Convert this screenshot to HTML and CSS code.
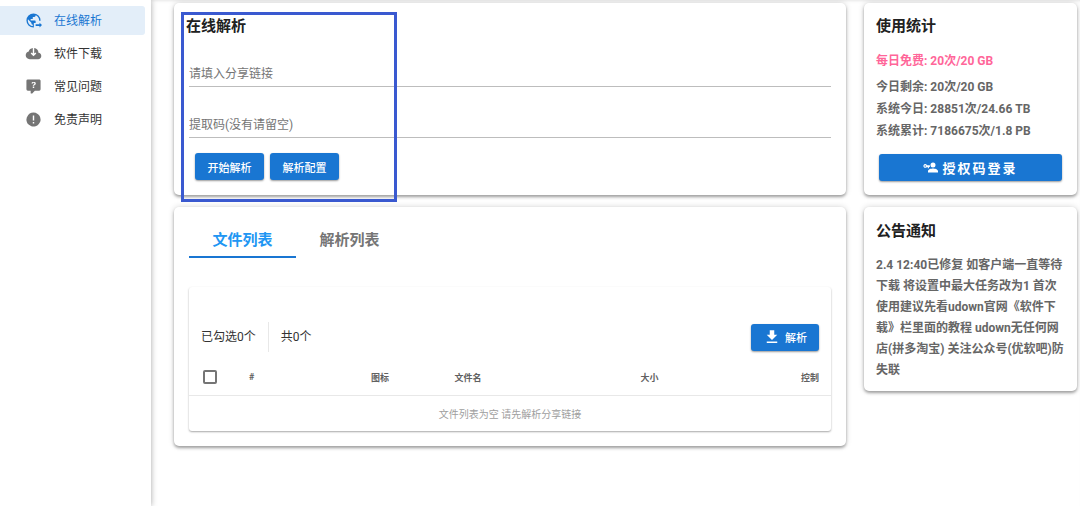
FILE: index.html
```html
<!DOCTYPE html>
<html lang="zh-CN">
<head>
<meta charset="utf-8">
<meta name="viewport" content="width=device-width, initial-scale=1">
<title>在线解析</title>
<link rel="stylesheet" href="styles.css">
</head>
<body>
<nav class="sidebar">
  <a class="nav-item active" href="#parse">
    <svg class="icon" viewBox="0 0 24 24"><mask id="globe-cut"><rect width="24" height="24" fill="#fff"/><path d="M12.500 15.500H18V12.500H24V24H12.500Z" fill="#000"/></mask><path mask="url(#globe-cut)" d="M17.900 17.390C17.640 16.590 16.890 16 16 16H15V13A1 1 0 0 0 14 12H8V10H10A1 1 0 0 0 11 9V7H13A2 2 0 0 0 15 5V4.590C17.930 5.770 20 8.640 20 12C20 14.080 19.200 15.970 17.900 17.390M11 19.930C7.050 19.440 4 16.080 4 12C4 11.380 4.080 10.780 4.210 10.210L9 15V16A2 2 0 0 0 11 18M12 2A10 10 0 0 0 2 12A10 10 0 0 0 12 22A10 10 0 0 0 22 12A10 10 0 0 0 12 2Z"/><path d="M24 18.500L20.500 15V17.300H15V19.700H20.500V22Z"/></svg>
    <span>在线解析</span>
  </a>
  <a class="nav-item" href="#download">
    <svg class="icon" viewBox="0 0 24 24"><path d="M6.500 20Q4.220 20 2.610 18.430 1 16.850 1 14.580 1 12.630 2.170 11.100 3.350 9.570 5.250 9.150 5.830 7.130 7.390 5.750 8.950 4.380 11 4.080V12.150L9.400 10.600L8 12L12 16L16 12L14.600 10.600L13 12.150V4.080Q15.580 4.430 17.290 6.390 19 8.350 19 11 20.730 11.200 21.860 12.500 23 13.780 23 15.500 23 17.380 21.690 18.690 20.380 20 18.500 20Z"/></svg>
    <span>软件下载</span>
  </a>
  <a class="nav-item" href="#faq">
    <svg class="icon" viewBox="0 0 24 24"><path fill-rule="evenodd" d="M4 2A2 2 0 0 0 2 4V16A2 2 0 0 0 4 18H8V21A1 1 0 0 0 9 22H9.500C9.750 22 10 21.900 10.200 21.710L13.900 18H20A2 2 0 0 0 22 16V4C22 2.890 21.100 2 20 2ZM12.190 5.500C11.300 5.500 10.590 5.680 10.050 6.040C9.500 6.400 9.220 7 9.270 7.690H11.240C11.240 7.410 11.340 7.200 11.500 7.060C11.700 6.920 11.920 6.850 12.190 6.850C12.500 6.850 12.770 6.930 12.950 7.110C13.130 7.280 13.220 7.500 13.220 7.800C13.220 8.080 13.140 8.330 13 8.540C12.830 8.760 12.620 8.940 12.360 9.080C11.840 9.400 11.500 9.680 11.290 9.920C11.100 10.160 11 10.500 11 11H13C13 10.720 13.050 10.500 13.140 10.320C13.230 10.150 13.400 10 13.660 9.850C14.120 9.640 14.500 9.360 14.790 9C15.080 8.630 15.230 8.240 15.230 7.800C15.230 7.100 14.960 6.540 14.420 6.120C13.880 5.710 13.130 5.500 12.190 5.500ZM11 12V14H13V12Z"/></svg>
    <span>常见问题</span>
  </a>
  <a class="nav-item" href="#disclaimer">
    <svg class="icon" viewBox="0 0 24 24"><path fill-rule="evenodd" d="M9 2.500Q12 1.500 15 2.500L18.500 4.500Q21 6.500 21.500 9Q22.500 12 21.500 15L19.500 18.500Q17.500 21 15 21.500Q12 22.500 9 21.500L5.500 19.500Q3 17.500 2.500 15Q1.500 12 2.500 9L4.500 5.500Q6.500 3 9 2.500ZM11 6.500V13.500H13V6.500ZM11 15.500V17.500H13V15.500Z"/></svg>
    <span>免责声明</span>
  </a>
</nav>

<main class="page">
  <div class="column">
    <section class="card parse-card">
      <h2 class="card-title">在线解析</h2>
      <form class="parse-form">
        <input class="field" type="text" placeholder="请填入分享链接" aria-label="请填入分享链接">
        <input class="field" type="text" placeholder="提取码(没有请留空)" aria-label="提取码(没有请留空)">
        <div class="actions">
          <button class="btn" type="button">开始解析</button>
          <button class="btn" type="button">解析配置</button>
        </div>
      </form>
      <div class="highlight"></div>
    </section>

    <section class="card list-card">
      <div class="tabs" role="tablist">
        <button class="tab selected" type="button" role="tab" aria-selected="true">文件列表</button>
        <button class="tab" type="button" role="tab" aria-selected="false">解析列表</button>
      </div>
      <div class="sheet">
        <div class="toolbar">
          <span class="count">已勾选0个</span>
          <span class="count total">共0个</span>
          <button class="btn download" type="button"><svg class="btn-icon" viewBox="0 0 24 24"><path d="M5 20H19V18H5ZM19 9H15V3H9V9H5L12 16Z"/></svg>解析</button>
        </div>
        <table class="files">
          <colgroup><col class="c-check"><col class="c-num"><col class="c-icon"><col class="c-name"><col class="c-size"><col class="c-ctl"></colgroup>
          <thead>
            <tr><th><input class="check" type="checkbox" aria-label="全选"></th><th>#</th><th>图标</th><th>文件名</th><th>大小</th><th class="end">控制</th></tr>
          </thead>
          <tbody>
            <tr><td class="empty" colspan="6">文件列表为空 请先解析分享链接</td></tr>
          </tbody>
        </table>
      </div>
    </section>
  </div>

  <aside class="column side">
    <section class="card stats-card">
      <h2 class="card-title">使用统计</h2>
      <p class="stat free">每日免费: 20次/20 GB</p>
      <p class="stat">今日剩余: 20次/20 GB</p>
      <p class="stat">系统今日: 28851次/24.66 TB</p>
      <p class="stat">系统累计: 7186675次/1.8 PB</p>
      <button class="btn login" type="button"><svg class="btn-icon" viewBox="0 0 24 24"><path fill-rule="evenodd" d="M16 4A4 4 0 1 1 16 12A4 4 0 1 1 16 4ZM16 13.500C18.700 13.500 24 14.800 24 17.500V20H8V17.500C8 14.800 13.300 13.500 16 13.500ZM3.500 6.500A3 3 0 0 1 6.300 8.500H11V11H9.500V13H7.500V11H6.300A3 3 0 1 1 3.500 6.500ZM3.500 8.500A1 1 0 1 0 3.500 10.800A1 1 0 1 0 3.500 8.500Z"/></svg>授权码登录</button>
    </section>
    <section class="card notice-card">
      <h2 class="card-title">公告通知</h2>
      <p class="notice">2.4 12:40已修复 如客户端一直等待下载 将设置中最大任务改为1 首次使用建议先看udown官网《软件下载》栏里面的教程 udown无任何网店(拼多淘宝) 关注公众号(优软吧)防失联</p>
    </section>
  </aside>
</main>
</body>
</html>
```
FILE: styles.css
```css
* {
  box-sizing: border-box;
}

body {
  margin: 0;
  min-height: 100vh;
  display: flex;
  background: #fff;
  color: #212121;
  font-family: Roboto, "Noto Sans CJK SC", sans-serif;
  font-size: 12px;
}

button,
input {
  font-family: inherit;
}

/* Navigation */
.sidebar {
  flex: 0 0 151px;
  padding: 6px 6px 0 0;
  display: flex;
  flex-direction: column;
  gap: 4px;
  box-shadow: 0 0 6px rgba(0, 0, 0, 0.35);
}

.nav-item {
  display: flex;
  align-items: center;
  gap: 12px;
  height: 29px;
  padding-left: 25px;
  border-radius: 0 3px 3px 0;
  color: #333;
  text-decoration: none;
  line-height: 16px;
}

.nav-item.active {
  background: #e3eef9;
  color: #1976d2;
}

.icon {
  width: 17px;
  height: 17px;
  fill: #757575;
}

.nav-item.active .icon {
  fill: #1976d2;
}

/* Page columns */
.page {
  flex: 1;
  min-width: 0;
  display: flex;
  gap: 18px;
  padding: 3px 3px 24px 23px;
  box-shadow: inset 0 3px 3px -2px rgba(0, 0, 0, 0.1);
}

.column {
  flex: 1;
  min-width: 0;
  display: flex;
  flex-direction: column;
  gap: 12px;
}

.column.side {
  flex: 0 0 213px;
}

.card {
  position: relative;
  border-radius: 5px;
  background: #fff;
  box-shadow: 0 2px 3px rgba(0, 0, 0, 0.32), 0 0 6px rgba(0, 0, 0, 0.16);
}

.card-title {
  margin: 0;
  font-size: 15px;
  font-weight: 700;
  line-height: 24px;
}

/* Buttons */
.btn {
  display: inline-flex;
  align-items: center;
  justify-content: center;
  height: 27px;
  padding: 0 12px;
  border: 0;
  border-radius: 3px;
  background: #1976d2;
  color: #fff;
  font-size: 11px;
  font-weight: 500;
  white-space: nowrap;
  box-shadow: 0 1px 2px rgba(0, 0, 0, 0.4);
}

.btn-icon {
  flex: none;
  width: 15px;
  height: 15px;
  fill: #fff;
}

/* Parse form */
.parse-card {
  padding: 11px 15px 15px 12px;
}

.parse-form {
  display: flex;
  flex-direction: column;
  padding: 23px 0 0 3px;
}

.field {
  width: 100%;
  height: 26px;
  margin-bottom: 25px;
  padding: 0;
  border: 0;
  border-bottom: 1px solid #bdbdbd;
  background: transparent;
  color: #212121;
  font-size: 12px;
}

.field + .field {
  margin-bottom: 15px;
}

.field::placeholder {
  color: #757575;
  opacity: 1;
}

.actions {
  display: flex;
  gap: 6px;
  padding-left: 6px;
}

.actions .btn {
  width: 69px;
}

.highlight {
  position: absolute;
  top: 9px;
  left: 7px;
  width: 216px;
  height: 190px;
  border: 3px solid #3a59d0;
  pointer-events: none;
}

/* File list */
.list-card {
  padding: 15px;
}

.tabs {
  display: flex;
  margin-bottom: 29px;
}

.tab {
  width: 107px;
  height: 36px;
  padding: 0 0 2px;
  border: 0;
  border-bottom: 2px solid transparent;
  background: transparent;
  color: #757575;
  font-size: 15px;
  font-weight: 700;
}

.tab.selected {
  border-color: #1976d2;
  color: #2196f3;
}

.sheet {
  border-radius: 3px;
  box-shadow: 0 1px 2px rgba(0, 0, 0, 0.35);
}

.toolbar {
  display: flex;
  align-items: center;
  padding: 35px 12px 8px;
  color: #333;
}

.count {
  padding-right: 12px;
  line-height: 30px;
}

.total {
  padding-left: 12px;
  border-left: 1px solid #e8e8e8;
}

.download {
  width: 68px;
  margin-left: auto;
  gap: 4px;
}

.download .btn-icon {
  width: 18px;
  height: 18px;
}

.files {
  width: 100%;
  table-layout: fixed;
  border-collapse: collapse;
}

.c-check {
  width: 48px;
}

.c-num {
  width: 19%;
}

.c-icon {
  width: 13%;
}

.c-name {
  width: 29%;
}

.files th {
  height: 35px;
  padding: 0 12px;
  border-bottom: 1px solid #e8e8e8;
  color: #616161;
  font-size: 9px;
  font-weight: 700;
  text-align: left;
}

.files th.end {
  text-align: right;
}

.check {
  appearance: none;
  display: block;
  width: 14px;
  height: 14px;
  margin: 0 0 0 2px;
  border: 2px solid #757575;
  border-radius: 2px;
}

.files .empty {
  height: 36px;
  padding: 0;
  color: #9e9e9e;
  font-size: 10px;
  text-align: center;
}

/* Side cards */
.stats-card {
  padding: 11px 12px 14px;
}

.stats-card .card-title {
  margin-bottom: 12px;
}

.stat {
  margin: 0;
  color: #666;
  font-size: 12px;
  font-weight: 700;
  line-height: 22px;
}

.stat.free {
  margin-bottom: 4px;
  color: #ff6699;
}

.login {
  width: calc(100% - 6px);
  margin: 12px 3px 0;
  gap: 4px;
  font-size: 13px;
  font-weight: 700;
  letter-spacing: 2px;
}

.notice-card {
  padding: 12px 12px 10px;
}

.notice {
  margin: 12px 0 0;
  color: #666;
  font-size: 12px;
  font-weight: 700;
  line-height: 21px;
}
```
